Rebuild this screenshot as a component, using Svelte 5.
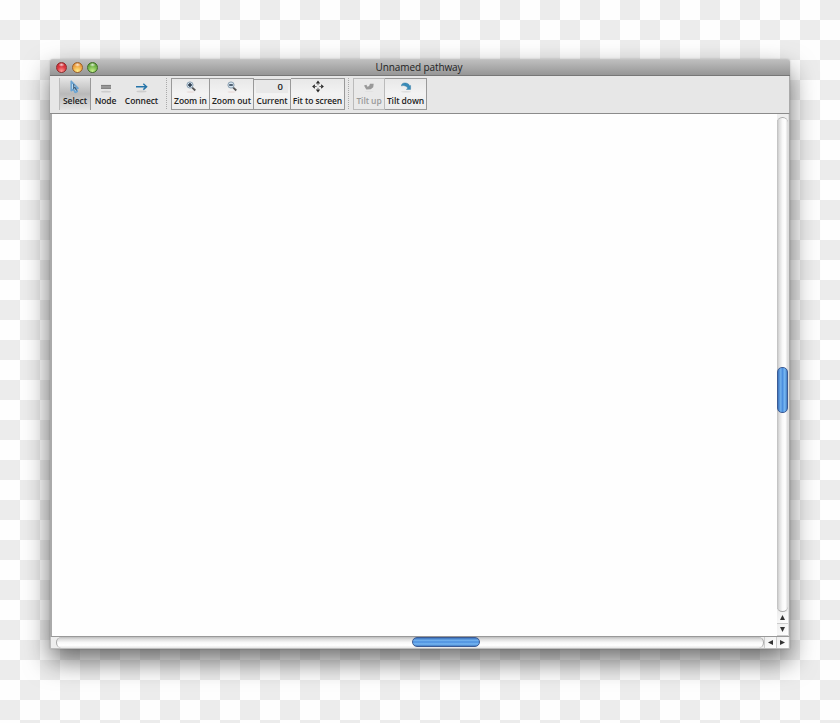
<script>
  let title = 'Unnamed pathway';
  let zoom = 0;

  const groups = [
    [
      { id: 'select', label: 'Select', width: 32, selected: true },
      { id: 'node', label: 'Node', width: 29 },
      { id: 'connect', label: 'Connect', width: 43 }
    ],
    [
      { id: 'zoom-in', label: 'Zoom in', width: 39, boxed: true },
      { id: 'zoom-out', label: 'Zoom out', width: 44, boxed: true },
      { id: 'current', label: 'Current', width: 37, boxed: true },
      { id: 'fit', label: 'Fit to screen', width: 54, boxed: true }
    ],
    [
      { id: 'tilt-up', label: 'Tilt up', width: 32, boxed: true, disabled: true },
      { id: 'tilt-down', label: 'Tilt down', width: 42, boxed: true }
    ]
  ];
</script>

<div class="backdrop">
  <div class="window">
    <div class="titlebar">
      <div class="lights">
        <span class="light red"></span>
        <span class="light yellow"></span>
        <span class="light green"></span>
      </div>
      <div class="title">{title}</div>
    </div>

    <div class="toolbar">
      {#each groups as group, i}
        {#if i > 0}<div class="separator"></div>{/if}
        <div class="group">
          {#each group as item}
            <div
              class="tool {item.id}"
              class:selected={item.selected}
              class:boxed={item.boxed}
              class:disabled={item.disabled}
              style="width: {item.width}px"
            >
              {#if item.id === 'current'}
                <div class="zoom-value">{zoom}</div>
              {:else}
                <svg class="icon" width="16" height="16" viewBox="0 0 16 16">
                  {#if item.id === 'select'}
                    <path d="M4.2 2.2v9.6l2.3-1.7 1.6 3.3 2.2-1-1.5-3.2h2.3z" fill="#b9dcf4" stroke="#6aa3d2" stroke-width="1.6" stroke-linejoin="round" />
                    <path d="M6.7 5v4.4l1.3-1 1.5 3.2" fill="none" stroke="#405c76" stroke-width="1.1" />
                  {:else if item.id === 'node'}
                    <ellipse cx="8" cy="12.7" rx="5" ry=".9" fill="#ccc" />
                    <path d="M3 6h10v3.8H3z" fill="#999" />
                    <path d="M3 6.4h10M3 9.4h10" stroke="#777" stroke-width=".8" />
                  {:else if item.id === 'connect'}
                    <ellipse cx="7.5" cy="12.5" rx="5" ry=".9" fill="#ccc" />
                    <path d="M2 7.7h10.4M9.3 4.8l3.3 2.9-3.3 2.9" fill="none" stroke="#2574a9" stroke-width="1.4" />
                  {:else if item.id === 'zoom-in' || item.id === 'zoom-out'}
                    <ellipse cx="7.5" cy="13" rx="4" ry=".7" fill="#e8dcda" />
                    <path d="M9 8.3l3.3 3.2" stroke="#555" stroke-width="1.8" />
                    <circle cx="7" cy="6" r="3.1" fill="#d4e3ee" stroke="#859aac" stroke-width=".9" />
                    <path d={item.id === 'zoom-in' ? 'M5 6h4M7 4v4' : 'M5.2 6h3.6'} stroke="#28394b" stroke-width="1.5" />
                  {:else if item.id === 'fit'}
                    <path d="M8 1.6l2.2 2.8H5.8zM8 13.4l2.2-2.8H5.8zM2.1 7.5l2.8-2.2v4.4zM13.9 7.5l-2.8-2.2v4.4z" fill="#282828" />
                    <path d="M8 4v2.2M8 8.8v2M4.4 7.5h2.2M9.4 7.5h2.2" stroke="#666" />
                  {:else if item.id === 'tilt-up'}
                    <ellipse cx="8" cy="12.5" rx="4.5" ry=".6" fill="#e0e0e0" />
                    <path d="M3 6.6l2.4-.8 1 2 1.7-.7.9-2.3h3.7l-.5 3.5-2.5 2-4.4.1z" fill="#999" />
                  {:else}
                    <ellipse cx="8" cy="12.8" rx="5" ry=".8" fill="#ddd" />
                    <path d="M3.4 7c0-2.6 2-3.4 4.5-3 2.2.4 3.4 1.5 3.7 3l1-.6v4H8.4l1.4-1.4C8.5 7.2 6 5.8 3.4 7z" fill="#398bb8" stroke="#28739e" stroke-width=".4" />
                  {/if}
                </svg>
              {/if}
              <span class="label">{item.label}</span>
            </div>
          {/each}
        </div>
      {/each}
    </div>

    <div class="pane">
      <div class="canvas"></div>
      <div class="vscroll">
        <div class="track"><div class="thumb"></div></div>
        <div class="arrow"><svg width="7" height="7" viewBox="0 0 7 7"><path d="M3.5 1L6 6H1z" /></svg></div>
        <div class="arrow"><svg width="7" height="7" viewBox="0 0 7 7"><path d="M3.5 6L1 1h5z" /></svg></div>
      </div>
    </div>
    <div class="hscroll">
      <div class="track"><div class="thumb"></div></div>
      <div class="arrow"><svg width="7" height="7" viewBox="0 0 7 7"><path d="M1 3.5L6 1v5z" /></svg></div>
      <div class="arrow"><svg width="7" height="7" viewBox="0 0 7 7"><path d="M6 3.5L1 6V1z" /></svg></div>
    </div>
  </div>
</div>

<style>
  :global(body) {
    margin: 0;
  }

  .backdrop {
    width: 840px;
    height: 723px;
    box-sizing: border-box;
    padding: 59px 50px 0;
    overflow: hidden;
    background: repeating-conic-gradient(#ececec 0 25%, #fefefe 0 50%) 0 0 / 40px 40px;
    font-family: "Open Sans", "Noto Sans", sans-serif;
    color: #222;
  }

  .window {
    display: flex;
    flex-direction: column;
    width: 740px;
    height: 590px;
    box-sizing: border-box;
    border-radius: 3px 3px 0 0;
    background: #e7e7e7;
    box-shadow: 0 12px 26px rgba(0, 0, 0, 0.56), 0 0 2px rgba(0, 0, 0, 0.2);
  }

  .titlebar {
    display: flex;
    align-items: center;
    height: 17px;
    box-sizing: border-box;
    border-top: 1px solid #c3c3c3;
    border-bottom: 1px solid #777;
    border-radius: 3px 3px 0 0;
    background: linear-gradient(#bebebe, #969696);
  }

  .lights {
    display: flex;
    gap: 4.5px;
    width: 65px;
    padding-left: 6px;
    box-sizing: border-box;
  }

  .light {
    width: 11px;
    height: 11px;
    flex: none;
    box-sizing: border-box;
    border-radius: 50%;
    border: 1px solid;
  }

  .red {
    border-color: #8e2c2d;
    background: radial-gradient(ellipse 3px 2px at 50% 20%, #fffc, transparent), radial-gradient(circle at 50% 90%, #ff9a96, #dc3840 50%, #c22a32);
  }

  .yellow {
    border-color: #9b602a;
    background: radial-gradient(ellipse 3px 2px at 50% 20%, #fffc, transparent), radial-gradient(circle at 50% 90%, #ffee88, #efa745 55%, #d98332);
  }

  .green {
    border-color: #3f6e26;
    background: radial-gradient(ellipse 3px 2px at 50% 20%, #fffc, transparent), radial-gradient(circle at 50% 90%, #c6f28a, #75b54a 55%, #55922e);
  }

  .title {
    flex: 1;
    padding: 0 67px 1px 0;
    font-size: 10px;
    line-height: 14px;
    letter-spacing: -0.1px;
    text-align: center;
  }

  .toolbar {
    display: flex;
    height: 38px;
    box-sizing: border-box;
    padding: 2px 0 0 9px;
    border-bottom: 1px solid #8b8b8b;
    border-right: 1px solid #aaa;
  }

  .group {
    display: flex;
  }

  .separator {
    width: 1px;
    height: 31px;
    margin: 0 4px 0 3px;
    background: repeating-linear-gradient(#aaa 0 1px, transparent 1px 2px);
  }

  .tool {
    display: flex;
    flex-direction: column;
    align-items: center;
    height: 32px;
    box-sizing: border-box;
    padding-top: 1px;
  }

  .tool.boxed {
    padding-top: 0;
    border: 1px solid #999;
    background: linear-gradient(#e8e8e8, #f3f3f3 50%, #ebebeb);
  }

  .tool.boxed + .tool.boxed {
    border-left-width: 0;
  }

  /* The readout sits one pixel below its neighbours */
  .tool.current {
    height: 31px;
    margin-top: 1px;
  }

  .selected {
    border-left: 1px solid #bbb;
    border-right: 1px solid #999;
    background: linear-gradient(#e4e4e4, #b9b9b9 50%, #e4e4e4);
  }

  .icon {
    flex: none;
    display: block;
  }

  .label {
    font-size: 8.5px;
    font-weight: 600;
    line-height: 11px;
    letter-spacing: -0.08px;
    white-space: nowrap;
  }

  .tool.disabled {
    color: #999;
    border-color: #bbb;
    background: #e9e9e9;
  }

  .zoom-value {
    width: 32px;
    height: 13px;
    margin-bottom: 2px;
    padding-right: 5px;
    box-sizing: border-box;
    background: #e8e8e8;
    font-size: 9.5px;
    font-weight: 600;
    line-height: 14px;
    text-align: right;
  }

  .pane {
    display: flex;
    flex: 1;
    min-height: 0;
    border-left: 2px solid #aaa;
    border-right: 1px solid #aaa;
  }

  .canvas {
    flex: 1;
    background: #fefefe;
  }

  .vscroll {
    display: flex;
    flex-direction: column;
    width: 12px;
    box-sizing: border-box;
    border-right: 1px solid #ddd;
    background: #eee;
  }

  .vscroll .track {
    flex: 1;
    margin-top: 3px;
    box-sizing: border-box;
    padding-top: 249px;
    border: 1px solid #a8a8a8;
    border-width: 1px 0;
    border-radius: 6px;
    background: linear-gradient(90deg, #bdbdbd, #ddd 20%, #f8f8f8 50%, #fff 75%, #d8d8d8);
  }

  .vscroll .thumb {
    height: 46px;
    box-sizing: border-box;
    border: 1px solid #3c5b94;
    border-radius: 5px;
    background: linear-gradient(90deg, #3b73bd, #72b1ee 30%, #4b8ede 50%, #78b9f3 75%, #417cc4);
  }

  .arrow {
    display: flex;
    flex: none;
    align-items: center;
    justify-content: center;
    box-sizing: border-box;
    background: linear-gradient(135deg, #eee, #fff);
    fill: #333;
  }

  .vscroll .arrow {
    height: 12px;
    border-bottom: 1px solid #ccc;
  }

  .hscroll {
    display: flex;
    height: 13px;
    box-sizing: border-box;
    padding: 0 1px 0 5px;
    border: 1px solid #bbb;
    border-top-color: #999;
    background: #eee;
  }

  .hscroll .track {
    flex: 1;
    box-sizing: border-box;
    padding-left: 355px;
    border: 1px solid #a8a8a8;
    border-width: 0 1px;
    border-radius: 6px;
    background: linear-gradient(#bdbdbd, #ddd 20%, #f8f8f8 50%, #fff 75%, #e5e5e5);
  }

  .hscroll .thumb {
    width: 68px;
    height: 10px;
    box-sizing: border-box;
    border: 1px solid #3c5b94;
    border-radius: 5px;
    background: linear-gradient(#3b73bd, #72b1ee 30%, #4b8ede 50%, #78b9f3 75%, #417cc4);
  }

  .hscroll .arrow {
    width: 12px;
    border-left: 1px solid #ccc;
  }
</style>
